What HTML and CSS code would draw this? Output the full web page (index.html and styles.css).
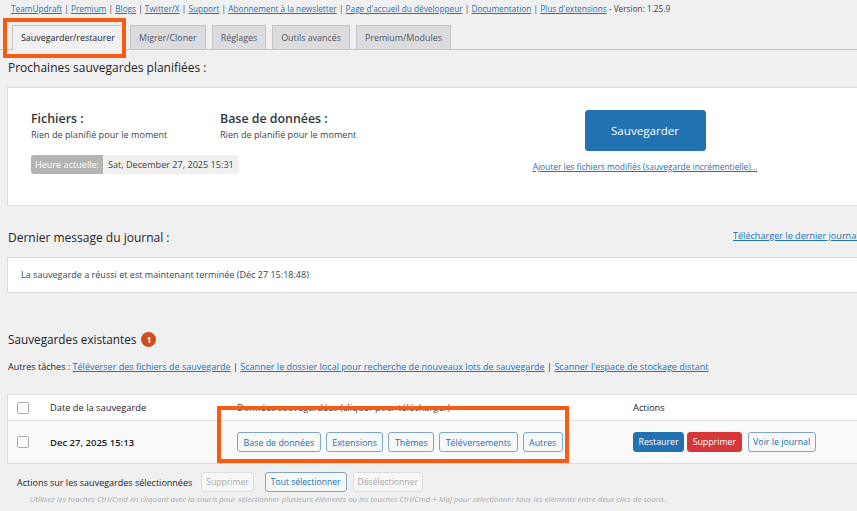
FILE: index.html
```html
<!DOCTYPE html>
<html lang="fr">
<head>
<meta charset="utf-8">
<title>UpdraftPlus</title>
<link rel="stylesheet" href="styles.css">
</head>
<body>
<div class="page">
  <div class="toplinks">
    <a href="#">TeamUpdraft</a> | <a href="#">Premium</a> | <a href="#">Blogs</a> | <a href="#">Twitter/X</a> | <a href="#">Support</a> | <a href="#">Abonnement à la newsletter</a> | <a href="#">Page d'accueil du développeur</a> | <a href="#">Documentation</a> | <a href="#">Plus d'extensions</a> - Version: 1.25.9
  </div>

  <nav class="tabs">
    <span class="tab active">Sauvegarder/restaurer</span>
    <span class="tab">Migrer/Cloner</span>
    <span class="tab">Réglages</span>
    <span class="tab">Outils avancés</span>
    <span class="tab">Premium/Modules</span>
    <span class="hl hl-tab"></span>
  </nav>

  <h2 class="h2 h2-first">Prochaines sauvegardes planifiées :</h2>

  <section class="panel sched">
    <div class="sched-left">
      <div class="sched-cols">
        <div class="sched-col">
          <h3 class="h3">Fichiers :</h3>
          <p class="small">Rien de planifié pour le moment</p>
        </div>
        <div class="sched-col">
          <h3 class="h3">Base de données :</h3>
          <p class="small">Rien de planifié pour le moment</p>
        </div>
      </div>
      <div class="now">
        <span class="now-label">Heure actuelle:</span><span class="now-value">Sat, December 27, 2025 15:31</span>
      </div>
    </div>
    <div class="sched-right">
      <button class="big-btn">Sauvegarder</button>
      <a href="#" class="inc-link">Ajouter les fichiers modifiés (sauvegarde incrémentielle)...</a>
    </div>
  </section>

  <div class="log-head">
    <h2 class="h2">Dernier message du journal :</h2>
    <a href="#" class="log-dl">Télécharger le dernier journal</a>
  </div>
  <section class="panel logbox">La sauvegarde a réussi et est maintenant terminée (Déc 27 15:18:48)</section>

  <h2 class="h2 h2-exist">Sauvegardes existantes <span class="count">1</span></h2>
  <div class="tasks">Autres tâches : <a href="#">Téléverser des fichiers de sauvegarde</a> | <a href="#">Scanner le dossier local pour recherche de nouveaux lots de sauvegarde</a> | <a href="#">Scanner l'espace de stockage distant</a></div>

  <div class="table-wrap">
    <div class="trow thead">
      <span class="cb"></span>
      <span class="c-date">Date de la sauvegarde</span>
      <span class="c-data">Données sauvegardées (cliquer pour télécharger)</span>
      <span class="c-act">Actions</span>
    </div>
    <div class="trow tbody">
      <span class="cb"></span>
      <span class="c-date strong">Dec 27, 2025 15:13</span>
      <span class="c-data btns">
        <button class="sbtn">Base de données</button>
        <button class="sbtn">Extensions</button>
        <button class="sbtn">Thèmes</button>
        <button class="sbtn">Téléversements</button>
        <button class="sbtn">Autres</button>
      </span>
      <span class="c-act btns acts">
        <button class="sbtn primary">Restaurer</button>
        <button class="sbtn danger">Supprimer</button>
        <button class="sbtn">Voir le journal</button>
      </span>
    </div>
    <span class="hl hl-data"></span>
  </div>

  <div class="bulk">
    <span class="bulk-label">Actions sur les sauvegardes sélectionnées</span>
    <button class="sbtn disabled">Supprimer</button>
    <button class="sbtn sel-all">Tout sélectionner</button>
    <button class="sbtn disabled">Désélectionner</button>
  </div>
  <p class="hint">Utilisez les touches Ctrl/Cmd en cliquant avec la souris pour sélectionner plusieurs éléments ou les touches Ctrl/Cmd + Maj pour sélectionner tous les éléments entre deux clics de souris.</p>
</div>
</body>
</html>
```

FILE: styles.css
```css
html, body {
  margin: 0;
  padding: 0;
  background: #f0f0f1;
  overflow: hidden;
}
body {
  font-family: "Open Sans", "Noto Sans", sans-serif;
  color: #3c434a;
  font-size: 10px;
}
a { color: #2271b1; text-decoration: underline; }
.page {
  width: 900px;
  position: relative;
}
.toplinks {
  padding: 1px 0 0 11px;
  height: 17px;
  font-size: 8.25px;
  line-height: 15px;
  color: #3c434a;
  white-space: nowrap;
}
.tabs {
  position: relative;
  display: flex;
  gap: 6px;
  padding-left: 12px;
  margin-top: 7px;
  border-bottom: 1px solid #c3c4c7;
  height: 24px;
}
.tab {
  display: block;
  height: 23px;
  line-height: 23px;
  padding: 0 8px;
  background: #dcdcde;
  border: 1px solid #c3c4c7;
  border-bottom: none;
  font-size: 8.9px;
  color: #50575e;
  white-space: nowrap;
}
.tab.active {
  background: #f0f0f1;
  color: #1d2327;
  height: 24px;
  margin-bottom: -1px;
}
.hl {
  position: absolute;
  border: 4px solid #f95a14;
  box-sizing: border-box;
  pointer-events: none;
}
.hl-tab {
  left: 3px;
  top: -7px;
  width: 123px;
  height: 40px;
}
.h2 {
  margin: 0;
  font-size: 12px;
  font-weight: 400;
  color: #1d2327;
  line-height: 18px;
}
.h2-first {
  padding: 9px 0 0 8px;
  height: 28px;
}
.panel {
  background: #fff;
  border: 1px solid #dcdcde;
  border-right: none;
  margin-left: 7px;
  box-sizing: border-box;
}
.sched {
  height: 119px;
  display: flex;
  padding: 22px 0 0 23px;
}
.sched-left { width: 459px; }
.sched-cols { display: flex; }
.sched-col { width: 189px; }
.h3 {
  margin: 0;
  font-size: 12.4px;
  font-weight: 600;
  color: #32373c;
  line-height: 18px;
}
.small {
  margin: 0;
  font-size: 9.1px;
  color: #3c434a;
  line-height: 14px;
}
.now {
  margin-top: 13px;
  display: flex;
  height: 19px;
  font-size: 9.1px;
  line-height: 19px;
}
.now-label {
  background: #b4b4b4;
  color: #fff;
  padding: 0 4px;
  border-radius: 3px 0 0 3px;
}
.now-value {
  background: #f0f0f0;
  color: #3c434a;
  padding: 0 5px;
  border-radius: 0 3px 3px 0;
}
.sched-right {
  width: 310px;
  display: flex;
  flex-direction: column;
  align-items: center;
}
.big-btn {
  width: 121px;
  height: 41px;
  background: #2271b1;
  border: 1px solid #2271b1;
  border-radius: 3px;
  color: #fff;
  font-family: inherit;
  font-size: 11.6px;
}
.inc-link {
  margin-top: 10px;
  font-size: 8.4px;
  white-space: nowrap;
}
.log-head {
  display: flex;
  align-items: flex-end;
  padding-left: 8px;
  margin-top: 21px;
  height: 24px;
}
.log-head .h2 { width: 725px; padding-bottom: 4px; flex: none; }
.log-dl {
  font-size: 9.1px;
  line-height: 14px;
  position: relative;
  top: -8px;
  white-space: nowrap;
}
.logbox {
  margin-top: 6px;
  height: 36px;
  padding: 0 0 0 13px;
  line-height: 34px;
  font-size: 9.05px;
  color: #3c434a;
}
.h2-exist {
  margin-top: 37px;
  padding-left: 8px;
  display: flex;
  align-items: center;
  gap: 5px;
  font-size: 11.75px;
}
.count {
  display: inline-block;
  width: 15px;
  height: 15px;
  border-radius: 50%;
  background: #cd4f1f;
  color: #fff;
  font-size: 8px;
  font-weight: 700;
  line-height: 15px;
  text-align: center;
}
.tasks {
  margin-top: 12px;
  padding-left: 8px;
  font-size: 9.05px;
  line-height: 14px;
  color: #1d2327;
  white-space: nowrap;
}
.table-wrap {
  position: relative;
  margin-top: 20px;
  margin-left: 7px;
  background: #fff;
  border: 1px solid #dcdcde;
  border-right: none;
}
.trow {
  display: flex;
  align-items: center;
}
.thead {
  height: 25px;
  border-bottom: 1px solid #e0e0e0;
  font-size: 9.3px;
  color: #1d2327;
}
.tbody {
  height: 42px;
  background: #f9f9f9;
  font-size: 9.5px;
}
.cb {
  width: 10px;
  height: 10px;
  border: 1px solid #a7aaad;
  border-radius: 2px;
  background: #fff;
  margin-left: 9px;
}
.c-date { margin-left: 21px; width: 187px; color: #1d2327; }
.strong { font-weight: 600; color: #1d2327; }
.c-data { width: 396px; color: #3c434a; }
.c-act { color: #1d2327; }
.btns { display: flex; gap: 5px; }
.acts { gap: 3px; }
.acts .danger { margin-right: 3px; }
.sbtn {
  height: 20px;
  padding: 0 5.5px;
  font-family: inherit;
  font-size: 8.9px;
  color: #2271b1;
  background: #f6f7f7;
  border: 1px solid #7fa6c9;
  border-radius: 3px;
  white-space: nowrap;
}
.acts .sbtn { padding: 0 4.5px; font-size: 8.8px; }
.sbtn.primary { background: #2271b1; border-color: #2271b1; color: #fff; }
.sbtn.danger { background: #d63638; border-color: #d63638; color: #fff; }
.sbtn.disabled { color: #a7aaad; border-color: #dcdcde; background: #f6f7f7; }
.hl-data {
  left: 209px;
  top: 11px;
  width: 352px;
  height: 57px;
}
.bulk {
  display: flex;
  align-items: center;
  gap: 6px;
  padding-left: 17px;
  margin-top: 8px;
  font-size: 9px;
  color: #1d2327;
}
.bulk .sbtn { padding: 0 4px; font-size: 8.6px; }
.bulk-label { margin-right: 3px; }
.bulk .sel-all { margin-left: 5px; padding: 0 5px; }
.hint {
  margin: 2px 0 0 30px;
  font-size: 7.85px;
  font-style: italic;
  color: #a7aaad;
  white-space: nowrap;
}
```
